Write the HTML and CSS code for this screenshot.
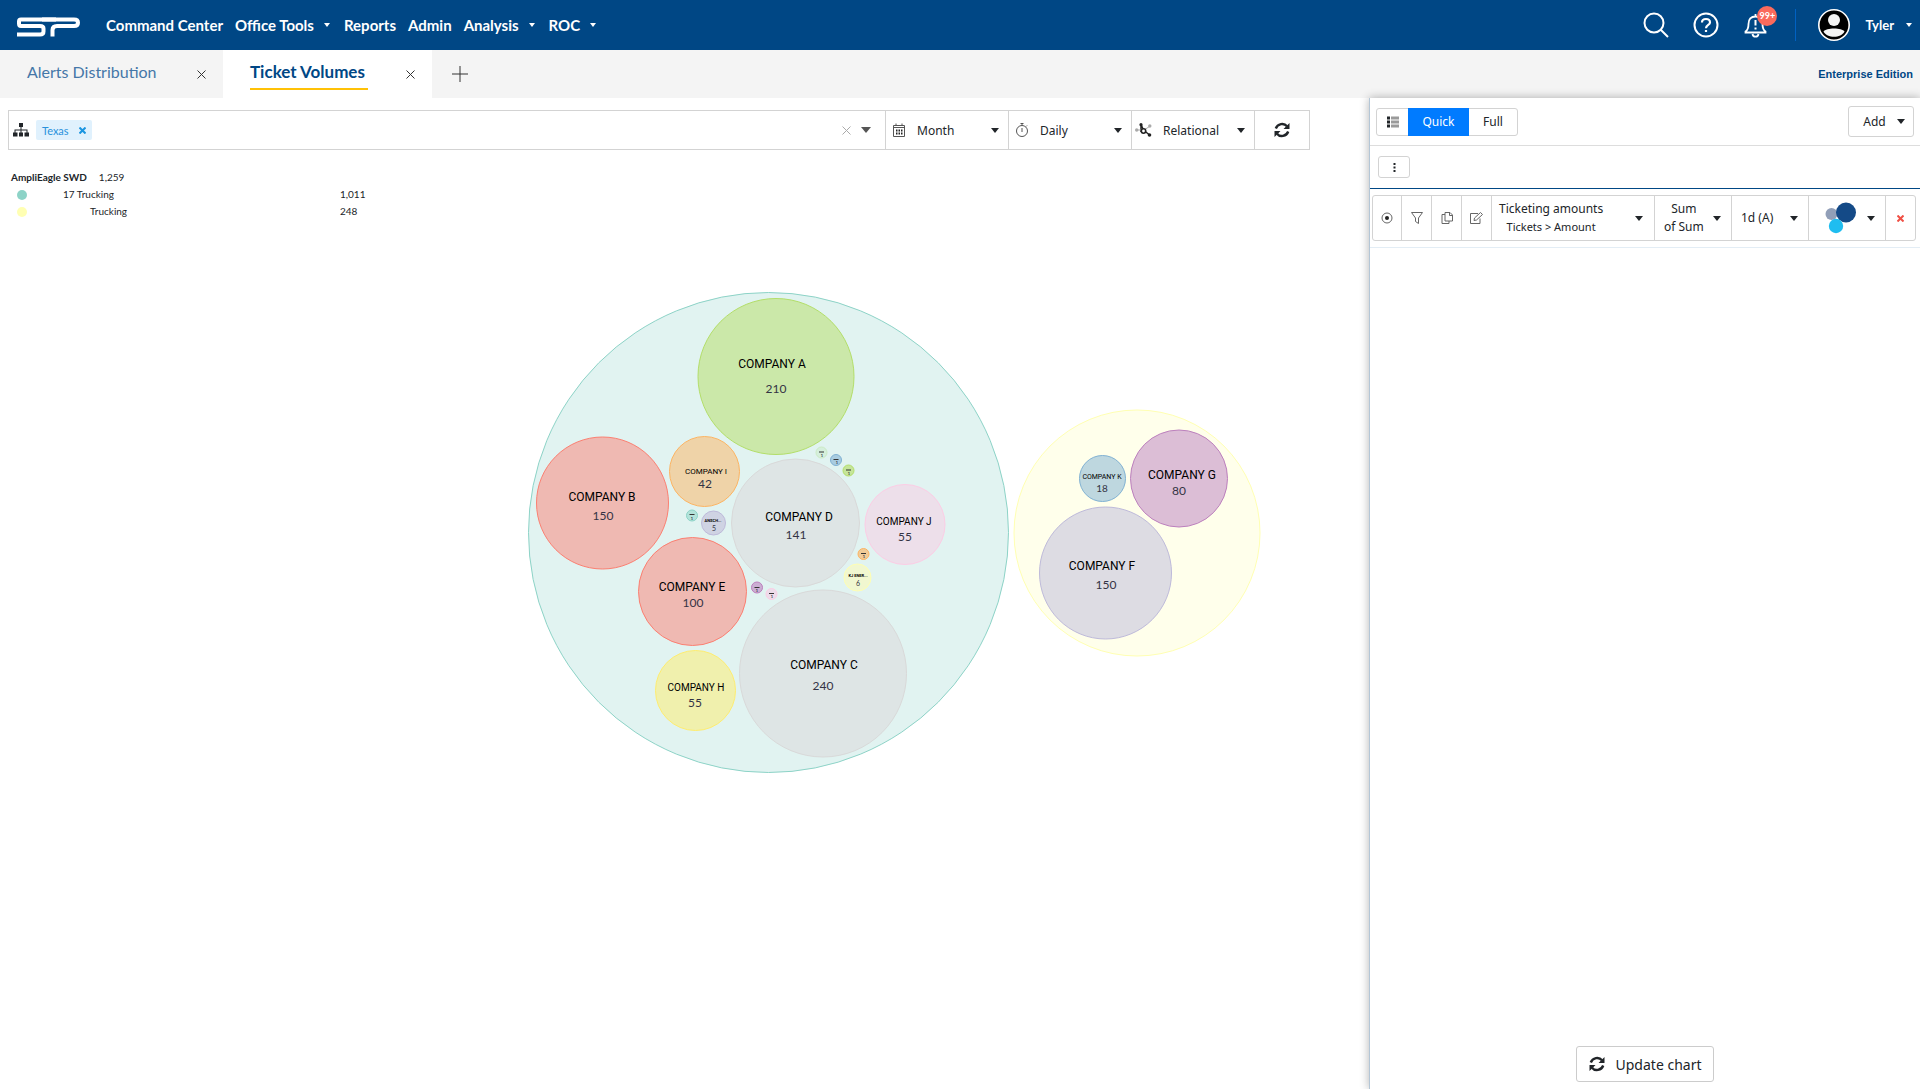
FILE: index.html
```html
<!DOCTYPE html>
<html lang="en">
<head>
    <meta charset="UTF-8">
    <meta name="viewport" content="width=device-width, initial-scale=1.0">
    <title>Ticket Volumes</title>
    <link rel="stylesheet" href="styles.css">
</head>
<body>

    <!-- Top navigation -->
    <header class="navbar">
        <a href="#" class="logo" aria-label="Home">
            <svg width="66" height="20" viewBox="0 0 66 20" fill="none" stroke="#fff" stroke-width="4">
                <path d="M40 2.500H5Q3 2.500 3 4.500V6.500Q3 9 5 9H24Q27.500 9 27.500 11.500V14.500Q27.500 17.500 24 17.500H1"/>
                <path d="M26 2.500H58Q62 2.500 62 5.700T58 9H41Q36.500 9 36.500 13V19.500"/>
            </svg>
        </a>
        <nav class="nav-left">
            <a href="#">Command Center</a>
            <a href="#">Office Tools<span class="caret"></span></a>
            <a href="#">Reports</a>
            <a href="#">Admin</a>
            <a href="#">Analysis<span class="caret"></span></a>
            <a href="#">ROC<span class="caret"></span></a>
        </nav>
        <div class="nav-right">
            <button class="icon-button" aria-label="Search">
                <svg width="26" height="26" viewBox="0 0 26 26" fill="none" stroke="#fff" stroke-width="2"><circle cx="11" cy="11" r="9.500"/><path d="M17.500 17.500L25 25"/></svg>
            </button>
            <button class="icon-button" aria-label="Help">
                <svg width="26" height="26" viewBox="0 0 26 26" fill="none" stroke="#fff" stroke-width="2"><circle cx="13" cy="13" r="11.500"/><path d="M9 10.500C9 5.800 17 5.800 17 10.500C17 13 13 12.800 13 16.200M13 18V20" stroke-width="2.200"/></svg>
            </button>
            <button class="icon-button bell" aria-label="Notifications">
                <svg width="26" height="26" viewBox="0 0 26 26" fill="none" stroke="#fff" stroke-width="1.800"><path d="M2.500 20.500H22.500V19.500C20 18 19.500 16 19.500 12C19.500 7 17 4.500 12.500 4.500S5.500 7 5.500 12C5.500 16 5 18 2.500 19.500ZM9.500 22C10 25.500 15 25.500 15.500 22M12.500 4.500V2"/><path d="M12.500 8V13.500M12.500 15.500V17.500" stroke-width="2"/></svg>
                <span class="badge">99+</span>
            </button>
            <span class="nav-divider"></span>
            <a href="#" class="user">
                <svg width="32" height="32" viewBox="0 0 32 32"><circle cx="16" cy="16" r="15.200" fill="#000" stroke="#fff" stroke-width="1.600"/><circle cx="16" cy="11" r="6" fill="#f4f4f4"/><path d="M5.500 22.500C8 18.500 24 18.500 26.500 22.500C23 29.500 9 29.500 5.500 22.500Z" fill="#f4f4f4"/></svg>
                Tyler<span class="caret"></span>
            </a>
        </div>
    </header>

    <!-- Open tabs -->
    <div class="tabs">
        <div class="tab tab-alerts">
            <a href="#">Alerts Distribution</a>
            <button class="close" aria-label="Close Alerts Distribution"><svg width="9" height="9" viewBox="0 0 9 9"><path d="M0.500 0.500L8.500 8.500M8.500 0.500L0.500 8.500"/></svg></button>
        </div>
        <div class="tab active">
            <a href="#">Ticket Volumes</a>
            <button class="close" aria-label="Close Ticket Volumes"><svg width="9" height="9" viewBox="0 0 9 9"><path d="M0.500 0.500L8.500 8.500M8.500 0.500L0.500 8.500"/></svg></button>
        </div>
        <button class="add-tab" aria-label="Add tab"><svg width="16" height="16" viewBox="0 0 16 16"><path d="M8 0V16M0 8H16"/></svg></button>
        <span class="edition">Enterprise Edition</span>
    </div>

    <div class="page">
        <main class="content">

            <!-- Filters -->
            <div class="filters">
                <div class="location">
                    <svg width="16" height="14" viewBox="0 0 16 14" fill="#212529"><path d="M6 0H10V4H8.500V6.500H14.500V9.500H16V13.500H11.500V9.500H13.500V7.500H8.500V9.500H10V13.500H6V9.500H7.500V7.500H2.500V9.500H4.500V13.500H0V9.500H1.500V6.500H7.500V4H6Z"/></svg>
                    <span class="tag">Texas<button class="tag-remove" aria-label="Remove Texas"><svg width="7" height="7" viewBox="0 0 7 7"><path d="M0.500 0.500L6.500 6.500M6.500 0.500L0.500 6.500"/></svg></button></span>
                    <button class="clear" aria-label="Clear"><svg width="9" height="9" viewBox="0 0 9 9"><path d="M0.500 0.500L8.500 8.500M8.500 0.500L0.500 8.500"/></svg></button>
                    <button class="open" aria-label="Open list"><span class="caret"></span></button>
                </div>
                <label class="filter">
                    <svg width="14" height="14" viewBox="0 0 14 14" fill="none" stroke="#555"><path d="M1.500 2.500H12.500V13.500H1.500ZM1.500 4.500H12.500M4 0.500V2.500M10 0.500V2.500"/><path d="M4 7.500H11M4 10.500H11" stroke="#222" stroke-width="1.800" stroke-dasharray="1.500 1"/></svg>
                    <select aria-label="Range"><option>Month</option></select>
                    <span class="caret big"></span>
                </label>
                <label class="filter">
                    <svg width="14" height="14" viewBox="0 0 14 14" fill="none" stroke="#555"><circle cx="7" cy="8" r="5.500"/><path d="M7 5V9M5.500 0.500H8.500M7 0.500V2.500M12 2.500L11 3.500"/></svg>
                    <select aria-label="Interval"><option>Daily</option></select>
                    <span class="caret big"></span>
                </label>
                <label class="filter relational">
                    <svg width="17" height="14" viewBox="0 0 17 14" fill="none"><path d="M8.500 7L6 1.500M8.500 7L14.500 12M6 1.500V9" stroke="#222" stroke-width="1.500"/><path d="M9 7L14.500 3.500M8 7H2" stroke="#aaa"/><circle cx="8.500" cy="8" r="2.200" fill="#fff" stroke="#222" stroke-width="1.600"/><g fill="#222"><circle cx="6" cy="1.700" r="1.600"/><circle cx="14.500" cy="12" r="1.800"/></g><g fill="#aaa"><circle cx="1.700" cy="7" r="1.700"/><circle cx="14.800" cy="3" r="1.700"/></g></svg>
                    <select aria-label="Layout"><option>Relational</option></select>
                    <span class="caret big"></span>
                </label>
                <button class="refresh" aria-label="Refresh">
                    <svg width="16" height="16" viewBox="0 0 16 16" fill="none" stroke="#212529" stroke-width="2.400"><path d="M1.800 6.500C3.500 1.500 10 0.500 13 4.300M14.200 9.500C12.500 14.500 6 15.500 3 11.700"/><path d="M15.500 1V7H9.500ZM0.500 15V9H6.500Z" fill="#212529" stroke="none"/></svg>
                </button>
            </div>

            <!-- Legend -->
            <table class="legend">
                <caption><strong>AmpliEagle SWD</strong><span>1,259</span></caption>
                <tr><td><span class="dot teal"></span></td><td>17 Trucking</td><td>1,011</td></tr>
                <tr><td><span class="dot yellow"></span></td><td class="indent">Trucking</td><td>248</td></tr>
            </table>

            <!-- Packed circles -->
            <svg class="chart" width="734" height="484" viewBox="527 291 734 484" role="img" aria-label="Ticket volumes by company">
                <circle cx="768.500" cy="532.500" r="240" fill="#e1f3f1" stroke="#8dd3c7"/>
                <circle cx="1137" cy="533" r="123" fill="#ffffeb" stroke="#ffffb3"/>

                <circle cx="776" cy="376.500" r="78" fill="#cbe8a9" stroke="#b3de69"/>
                <circle cx="602.500" cy="503" r="66" fill="#efb9b2" stroke="#fb8072"/>
                <circle cx="704.500" cy="471.500" r="35" fill="#efd3a8" stroke="#fdb462"/>
                <circle cx="795.500" cy="523" r="64" fill="#dee5e5" stroke="#d9d9d9"/>
                <circle cx="905" cy="524.500" r="40" fill="#eddfea" stroke="#fccde5"/>
                <circle cx="692.500" cy="591.500" r="54" fill="#efb9b2" stroke="#fb8072"/>
                <circle cx="695.500" cy="690.500" r="40" fill="#f0f0ad" stroke="#ffed6f"/>
                <circle cx="823" cy="673.500" r="83.500" fill="#dee5e5" stroke="#d9d9d9"/>
                <circle cx="1179" cy="478.500" r="48.500" fill="#dcbed6" stroke="#bc80bd"/>
                <circle cx="1102.500" cy="478.500" r="23" fill="#bed7df" stroke="#80b1d3"/>
                <circle cx="1105.500" cy="573" r="66" fill="#dddce3" stroke="#bebada"/>

                <circle cx="713.500" cy="523" r="12" fill="#cfd3e3" stroke="#bebada"/>
                <circle cx="857.500" cy="577.500" r="13.500" fill="#f1f7d0" stroke="#ffffb3"/>
                <circle cx="821.500" cy="452.500" r="5.500" fill="#d5efdc" stroke="#ccebc5"/>
                <circle cx="836" cy="460" r="5.500" fill="#a9cce0" stroke="#80b1d3"/>
                <circle cx="848.500" cy="470.500" r="5.500" fill="#c5e59a" stroke="#b3de69"/>
                <circle cx="692" cy="515.500" r="5.500" fill="#b3e3da" stroke="#8dd3c7"/>
                <circle cx="863.500" cy="554" r="5.500" fill="#f0cb98" stroke="#fdb462"/>
                <circle cx="757" cy="587.500" r="5.500" fill="#cbaed3" stroke="#bc80bd"/>
                <circle cx="771.500" cy="594" r="5.500" fill="#eddcea" stroke="#fccde5"/>

                <!-- circles too small for a readable name -->
                <path d="M819 452H824M833.500 459.500H838.500M846 470H851M689.500 514.500H694.500M861 553.500H866M754.500 587.500H759.500M769 593.500H774" stroke="#333" stroke-width="1.200"/>

                <g class="name">
                    <text x="772" y="368">COMPANY A</text>
                    <text x="602" y="501">COMPANY B</text>
                    <text x="799" y="521">COMPANY D</text>
                    <text x="692" y="591">COMPANY E</text>
                    <text x="824" y="669">COMPANY C</text>
                    <text x="1182" y="479">COMPANY G</text>
                    <text x="1102" y="570">COMPANY F</text>
                    <text x="904" y="525" class="medium">COMPANY J</text>
                    <text x="696" y="691" class="medium">COMPANY H</text>
                    <text x="706" y="474" class="small">COMPANY I</text>
                    <text x="1102" y="479" class="smaller">COMPANY K</text>
                    <text x="713" y="522" class="tiny">ANSCH...</text>
                    <text x="858" y="577" class="tiny">KJ ENER...</text>
                </g>
                <g class="value">
                    <text x="776" y="393">210</text>
                    <text x="603" y="520">150</text>
                    <text x="705" y="488">42</text>
                    <text x="796" y="539">141</text>
                    <text x="905" y="541">55</text>
                    <text x="693" y="607">100</text>
                    <text x="695" y="707">55</text>
                    <text x="823" y="690">240</text>
                    <text x="1179" y="495">80</text>
                    <text x="1106" y="589">150</text>
                    <text x="1102" y="492" class="medium">18</text>
                    <text x="714" y="531" class="smaller">5</text>
                    <text x="858" y="586" class="smaller">6</text>
                    <text x="822" y="457" class="tiny">1</text>
                    <text x="837" y="464" class="tiny">1</text>
                    <text x="849" y="475" class="tiny">1</text>
                    <text x="692" y="520" class="tiny">1</text>
                    <text x="864" y="558" class="tiny">1</text>
                    <text x="757" y="592" class="tiny">1</text>
                    <text x="772" y="598" class="tiny">1</text>
                </g>
            </svg>
        </main>

        <!-- Chart settings -->
        <aside class="panel">
            <div class="panel-head">
                <div class="button-group">
                    <button aria-label="List"><svg width="12" height="12" viewBox="0 0 12 12"><path d="M0 2H3M0 6H3M0 10H3" stroke="#212529" stroke-width="3"/><path d="M4 2H12M4 6H12M4 10H12" stroke="#9a9a9a" stroke-width="3"/></svg></button>
                    <button class="selected">Quick</button>
                    <button>Full</button>
                </div>
                <button class="add">Add<span class="caret big"></span></button>
            </div>
            <div class="panel-tools">
                <button class="more" aria-label="More"><svg width="3" height="9" viewBox="0 0 3 9" fill="#212529"><path d="M0.500 0H2.500V2H0.500ZM0.500 3.500H2.500V5.500H0.500ZM0.500 7H2.500V9H0.500Z"/></svg></button>
            </div>
            <div class="series-wrap">
                <div class="series">
                    <button class="tool" aria-label="Show"><svg width="12" height="12" viewBox="0 0 12 12"><circle cx="6" cy="6" r="5" fill="none" stroke="#666"/><circle cx="6" cy="6" r="2" fill="#222"/></svg></button>
                    <button class="tool" aria-label="Filter"><svg width="12" height="12" viewBox="0 0 12 12" fill="none" stroke="#666"><path d="M0.500 0.500H11.500L7.500 6V11.500L4.500 9.500V6Z"/></svg></button>
                    <button class="tool" aria-label="Copy"><svg width="12" height="12" viewBox="0 0 12 12" fill="none" stroke="#666"><path d="M4 0.500H9L11.500 3V9H4ZM4 2.500H1V11.500H8V9M8.500 0.500V3.500H11.500"/></svg></button>
                    <button class="tool" aria-label="Edit"><svg width="13" height="12" viewBox="0 0 13 12" fill="none" stroke="#666"><path d="M8 1.500H0.500V11.500H10V6.500M4 8.500L4.500 6L10.500 0.500L12.500 2.500L6.500 8Z"/></svg></button>
                    <button class="measure"><span>Ticketing amounts<small>Tickets &gt; Amount</small></span><i class="caret big"></i></button>
                    <button class="aggregate"><small>Sum<br>of Sum</small><i class="caret big"></i></button>
                    <button class="aggregate"><small>1d (A)</small><i class="caret big"></i></button>
                    <button class="aggregate chart-type" aria-label="Chart type"><svg width="32" height="32" viewBox="0 0 32 32"><circle cx="6.500" cy="12" r="6" fill="#919fb8"/><circle cx="21" cy="10.500" r="10" fill="#144a87"/><circle cx="11" cy="24" r="7.200" fill="#1fbdf0"/></svg><i class="caret big"></i></button>
                    <button class="remove" aria-label="Remove"><svg width="7" height="7" viewBox="0 0 7 7"><path d="M0.500 0.500L6.500 6.500M6.500 0.500L0.500 6.500"/></svg></button>
                </div>
            </div>
            <button class="update">
                <svg width="16" height="16" viewBox="0 0 16 16" fill="none" stroke="#212529" stroke-width="2.400"><path d="M1.800 6.500C3.500 1.500 10 0.500 13 4.300M14.200 9.500C12.500 14.500 6 15.500 3 11.700"/><path d="M15.500 1V7H9.500ZM0.500 15V9H6.500Z" fill="#212529" stroke="none"/></svg>
                Update chart
            </button>
        </aside>
    </div>

</body>
</html>
```
FILE: styles.css
```css
* {
    box-sizing: border-box;
}

body {
    font-family: "Noto Sans", sans-serif;
    font-size: 12px;
    color: #212529;
    background-color: #fff;
    margin: 0;
    min-height: 100vh;
    display: flex;
    flex-direction: column;
}

a {
    color: inherit;
    text-decoration: none;
}

button, select {
    font: inherit;
    color: inherit;
    background: none;
    border: none;
    padding: 0;
    cursor: pointer;
}

svg {
    display: block;
    flex: none;
}

.caret {
    display: inline-block;
    flex: none;
    border: 3px solid transparent;
    border-top: 4px solid currentColor;
    border-bottom: 0;
}

.caret.big {
    border-width: 5px 4px 0;
}

/* Top navigation */
.navbar {
    display: flex;
    align-items: center;
    height: 50px;
    padding: 0 8px 0 16px;
    background-color: #004785;
    color: #fff;
    font-family: Lato, sans-serif;
    font-size: 15px;
    font-weight: bold;
}

.logo {
    margin: 3px 24px 0 0;
}

.nav-left {
    display: flex;
    gap: 12px;
}

.nav-left a {
    display: flex;
    align-items: center;
}

.nav-left .caret {
    margin: 0 2px 0 10px;
}

.nav-right {
    display: flex;
    align-items: center;
    margin-left: auto;
}

.icon-button {
    margin-right: 24px;
}

.bell {
    position: relative;
    margin-right: 26px;
}

.badge {
    position: absolute;
    top: -6px;
    left: 14px;
    width: 20px;
    height: 20px;
    border-radius: 50%;
    background-color: #fa6a5c;
    font-size: 9px;
    line-height: 20px;
}

.nav-divider {
    width: 1px;
    height: 32px;
    margin-right: 22px;
    background-color: #0061c2;
}

.user {
    display: flex;
    align-items: center;
    font-size: 13px;
}

.user svg {
    margin-right: 15px;
}

.user .caret {
    margin-left: 12px;
}

/* Tabs */
.tabs {
    display: flex;
    align-items: center;
    height: 48px;
    padding-right: 7px;
    background-color: #f4f4f4;
    color: #004785;
    font-family: Lato, sans-serif;
}

.tab {
    display: flex;
    align-items: center;
    justify-content: space-between;
    height: 48px;
    width: 209px;
    padding: 0 17px 0 27px;
    font-size: 16px;
}

.tab-alerts {
    width: 223px;
    color: #4577a8;
}

.tab a {
    margin-bottom: 5px;
    padding: 8px 0 6px;
    border-bottom: 2px solid transparent;
}

.tab.active {
    background-color: #fff;
    font-size: 17px;
    font-weight: bold;
}

.tab.active a {
    padding-right: 3px;
    border-color: #ffc107;
}

.close svg, .add-tab svg {
    fill: none;
    stroke: #333;
}

.add-tab {
    margin-left: 20px;
}

.edition {
    margin-left: auto;
    font-family: "Liberation Sans", sans-serif;
    font-size: 11px;
    font-weight: bold;
}

.page {
    display: flex;
    flex: 1;
}

.content {
    flex: 1;
    padding: 12px 59px 0 8px;
}

/* Filters */
.filters {
    display: flex;
    height: 40px;
    border: 1px solid #d3d3d3;
}

.location {
    display: flex;
    flex: 1;
    align-items: center;
    padding: 0 14px 0 4px;
}

.tag {
    display: flex;
    align-items: center;
    gap: 10px;
    height: 20px;
    margin-left: 7px;
    padding: 0 6px;
    border-radius: 2px;
    background-color: #e0f1fd;
    color: #2a91dc;
    font-family: Lato, sans-serif;
    font-size: 11px;
}

.tag-remove svg {
    stroke: #1b95e0;
    stroke-width: 2;
}

.clear {
    margin: 0 10px 0 auto;
}

.clear svg {
    stroke: #aaa;
}

.open {
    display: flex;
    color: #555;
}

.open .caret {
    border-width: 6px 5px 0;
}

.filter {
    display: flex;
    align-items: center;
    width: 123px;
    padding: 0 9px 0 6px;
    border-left: 1px solid #d3d3d3;
}

.filter.relational {
    padding-left: 3px;
}

.filter select {
    flex: 1;
    appearance: none;
    margin-left: 11px;
}

.refresh {
    width: 55px;
    padding-left: 19px;
    border-left: 1px solid #d3d3d3;
}

/* Legend */
.legend {
    margin: 19px 0 0 3px;
    border-collapse: collapse;
    font-family: Lato, sans-serif;
    font-size: 10px;
    line-height: 17px;
}

.legend caption {
    text-align: left;
}

.legend caption span {
    margin-left: 12px;
}

.legend td {
    height: 17px;
    padding: 0;
}

.legend td:first-child {
    width: 52px;
    padding-left: 6px;
}

.legend td:nth-child(2) {
    width: 277px;
}

.legend .indent {
    padding-left: 27px;
}

.dot {
    display: block;
    width: 10px;
    height: 10px;
    border-radius: 50%;
}

.dot.teal {
    background-color: #8dd3c7;
}

.dot.yellow {
    background-color: #ffffb3;
}

/* Chart */
.chart {
    margin: 71px 49px 0 auto;
}

.chart text {
    text-anchor: middle;
    font-size: 12px;
}

.name {
    font-family: Roboto, sans-serif;
    fill: #000;
}

.value {
    font-family: Lato, sans-serif;
    fill: #334;
}

.chart .medium {
    font-size: 10px;
}

.chart .small {
    font-size: 8px;
}

.chart .smaller {
    font-size: 7px;
}

.chart .tiny {
    font-size: 4px;
    font-weight: bold;
}

/* Settings panel */
.panel {
    display: flex;
    flex-direction: column;
    width: 551px;
    border-left: 1px solid #b4c6d6;
    background-color: #fff;
    box-shadow: 0 0 9px rgba(0, 0, 0, 0.3);
}

.panel button {
    display: flex;
    align-items: center;
    justify-content: center;
}

.panel-head {
    display: flex;
    align-items: center;
    justify-content: space-between;
    height: 48px;
    padding: 0 6px;
    border-bottom: 1px solid #ddd;
}

.button-group {
    display: flex;
    height: 28px;
    border: 1px solid #d3d3d3;
    border-radius: 3px;
}

.button-group button {
    width: 48px;
}

.button-group button:first-child {
    width: 31px;
}

.button-group .selected {
    width: 61px;
    margin: -1px 0;
    background-color: #007bff;
    color: #fff;
}

.panel .add {
    gap: 11px;
    width: 66px;
    height: 31px;
    padding-left: 6px;
    border: 1px solid #d3d3d3;
    border-radius: 3px;
}

.panel-tools {
    height: 43px;
    padding: 10px 8px;
    border-bottom: 1px solid #004785;
}

.more {
    width: 32px;
    height: 22px;
    border: 1px solid #d3d3d3;
    border-radius: 3px;
}

.series-wrap {
    padding: 6px 4px 6px 2px;
    border-bottom: 1px solid #e3edf5;
}

.series {
    display: flex;
    height: 46px;
    border: 1px solid #d3d3d3;
    border-radius: 3px;
}

.series button + button {
    border-left: 1px solid #d3d3d3;
}

.tool {
    width: 30px;
}

.tool:first-child {
    width: 28px;
}

.series .measure {
    flex: 1;
    justify-content: space-between;
    padding: 0 11px 0 7px;
    line-height: 18px;
}

.series small {
    display: block;
    font-size: 12px;
    line-height: 18px;
}

.series .measure small {
    font-size: 11px;
}

.series .aggregate {
    justify-content: space-between;
    width: 77px;
    padding: 0 10px 0 9px;
}

.series .chart-type {
    padding-left: 16px;
}

.series .remove {
    width: 30px;
}

.remove svg {
    stroke: #f05045;
    stroke-width: 2;
}

.panel .update {
    gap: 11px;
    width: 138px;
    height: 36px;
    margin: auto auto 7px;
    border: 1px solid #ccc;
    border-radius: 3px;
    font-size: 14px;
}
```
